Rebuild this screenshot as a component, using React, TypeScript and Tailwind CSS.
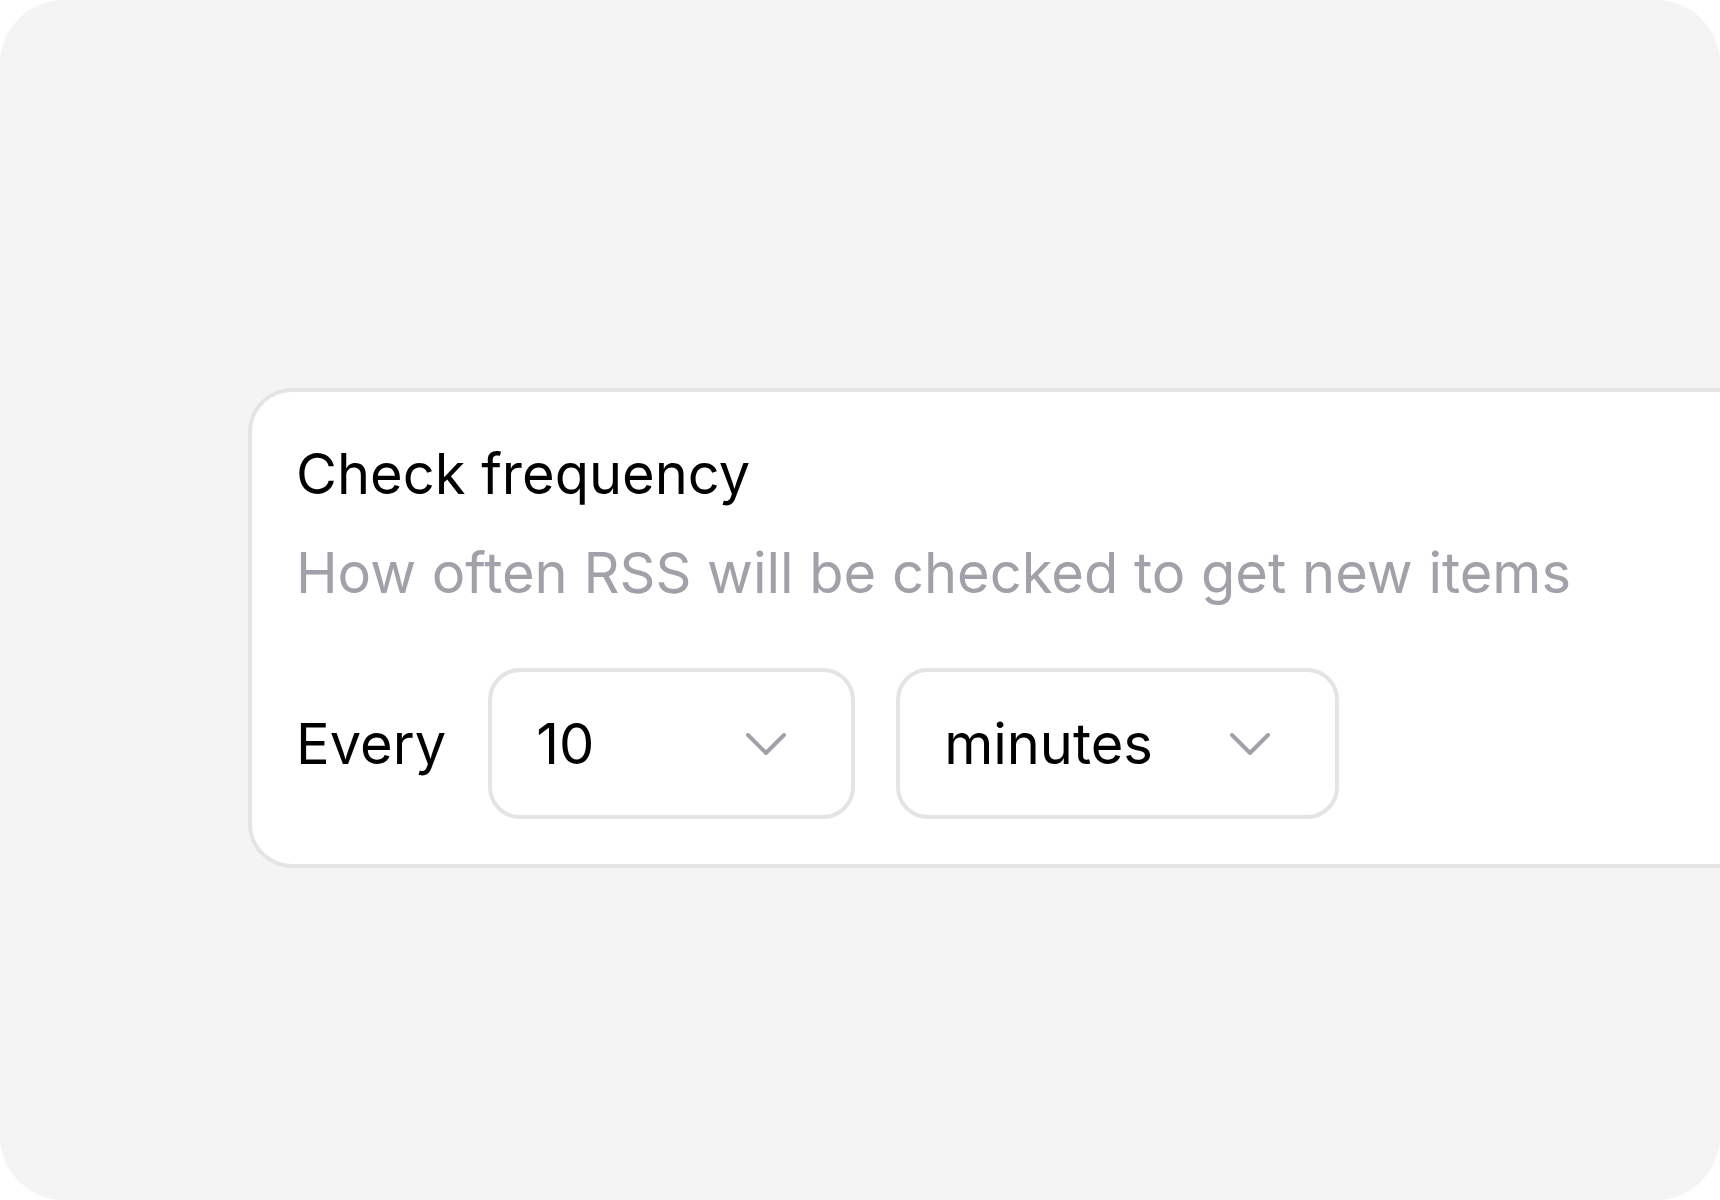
function Chevron() {
  return (
    <svg width="40" height="22" viewBox="0 0 40 22" fill="none" className="shrink-0">
      <path d="M2 2 L20 20 L38 2" stroke="#a1a1aa" strokeWidth="4" strokeLinecap="round" strokeLinejoin="round" />
    </svg>
  )
}

function Select({ value, width }: { value: string; width: string }) {
  return (
    <div
      className={`flex h-[151px] ${width} items-center justify-between rounded-[32px] border-4 border-[#e4e4e7] bg-white pl-[44px] pr-[65px]`}
    >
      <span className="text-[56px] leading-none text-black">{value}</span>
      <Chevron />
    </div>
  )
}

export default function App() {
  return (
    <div className="min-h-screen bg-white" style={{ fontFamily: "Inter, 'Noto Sans', sans-serif" }}>
      <div className="flex h-[1200px] w-[1720px] flex-col overflow-hidden rounded-[64px] bg-[#f4f4f4] pt-[388px]">
        <div className="ml-[248px] w-[1600px] shrink-0 rounded-[44px] border-4 border-[#e4e4e7] bg-white pb-[45px] pl-[44px] pt-[54px]">
          <h1 className="text-[56px] font-normal leading-none text-black">Check frequency</h1>
          <p className="mt-[43px] text-[56px] leading-none text-[#a1a1aa]">
            How often RSS will be checked to get new items
          </p>
          <div className="mt-[67px] flex items-center">
            <span className="mr-[42px] text-[56px] leading-none text-black">Every</span>
            <Select value="10" width="w-[367px]" />
            <div className="w-[41px]" />
            <Select value="minutes" width="w-[443px]" />
          </div>
        </div>
      </div>
    </div>
  )
}
